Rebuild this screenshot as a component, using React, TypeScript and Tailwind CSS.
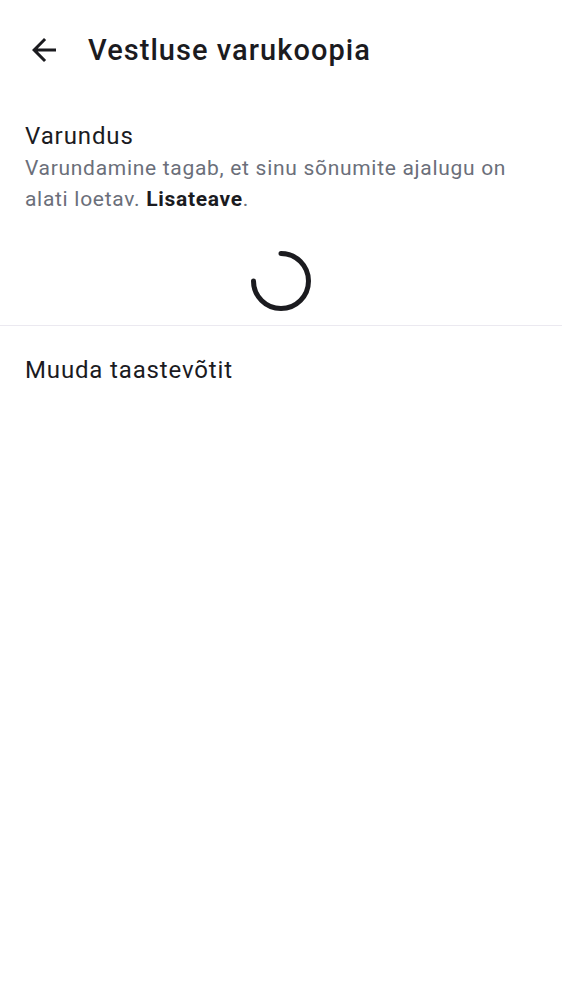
export default function App() {
  return (
    <div className="min-h-screen w-full bg-white text-[#1b1b1f]" style={{ fontFamily: 'Roboto, "Noto Sans", sans-serif' }}>
      {/* Toolbar */}
      <header className="flex items-center h-[100px] pl-[26px] gap-[26px]">
        <button className="w-9 h-9 flex items-center justify-center">
          <svg width="36" height="36" viewBox="0 0 24 24" fill="#1b1b1f">
            <path d="M20 11H7.83l5.59-5.59L12 4l-8 8 8 8 1.41-1.41L7.83 13H20v-2z" />
          </svg>
        </button>
        <h1 className="text-[29px] font-medium tracking-[1.05px] leading-none">Vestluse varukoopia</h1>
      </header>

      {/* Varundus */}
      <section className="px-[25px] pt-[21px]">
        <div className="text-[24px] leading-[30px] tracking-[0.9px]">Varundus</div>
        <p className="text-[21px] leading-[31px] text-[#6b6f7a] tracking-[0.7px] mt-[2px]">
          Varundamine tagab, et sinu sõnumite ajalugu on alati loetav.{' '}
          <span className="font-bold text-[#1b1b1f]">Lisateave</span>.
        </p>
        <div className="flex justify-center pt-[33px] pb-[11px]">
          <svg width="66" height="66" viewBox="0 0 66 66" fill="none">
            <path
              d="M33 5.5 A27.5 27.5 0 1 1 5.5 33"
              stroke="#1b1b1f"
              strokeWidth="5"
              strokeLinecap="round"
            />
          </svg>
        </div>
      </section>

      <div className="h-px bg-[#ebe9f0]" />

      {/* Muuda taastevõtit */}
      <div className="px-[25px] pt-[29px] text-[24px] leading-[30px] tracking-[0.85px]">Muuda taastevõtit</div>
    </div>
  );
}
